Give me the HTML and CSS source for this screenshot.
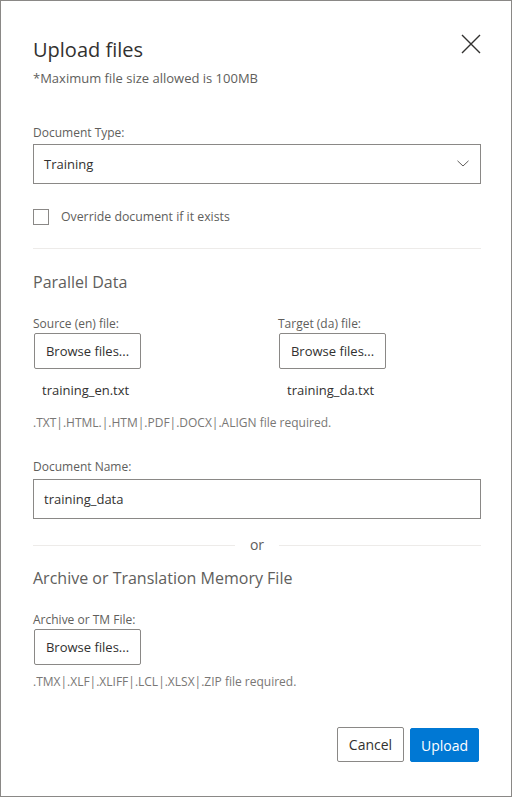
FILE: index.html
```html
<!DOCTYPE html>
<html lang="en">
<head>
<meta charset="utf-8">
<title>Upload files</title>
<link rel="stylesheet" href="styles.css">
</head>
<body>
<div class="dialog">
  <div class="header">
    <h1 class="title">Upload files</h1>
    <button class="close" aria-label="Close">
      <svg width="20" height="20" viewBox="0 0 20 20"><path d="M1 1 L19 19 M19 1 L1 19" stroke="#323130" stroke-width="1.4" fill="none"/></svg>
    </button>
  </div>
  <p class="subtitle">*Maximum file size allowed is 100MB</p>

  <label class="label label-doctype">Document Type:</label>
  <div class="select">
    <span class="select-value">Training</span>
    <svg class="chevron" width="12" height="7" viewBox="0 0 12 7"><path d="M0.5 0.8 L6 6 L11.5 0.8" stroke="#605e5c" stroke-width="1" fill="none"/></svg>
  </div>

  <div class="checkrow">
    <span class="checkbox"></span>
    <span class="checklabel">Override document if it exists</span>
  </div>

  <hr class="divider">

  <h2 class="section">Parallel Data</h2>

  <div class="filegrid">
    <div class="filecol">
      <label class="label">Source (en) file:</label>
      <button class="btn btn-browse">Browse files...</button>
      <div class="filename">training_en.txt</div>
    </div>
    <div class="filecol">
      <label class="label">Target (da) file:</label>
      <button class="btn btn-browse">Browse files...</button>
      <div class="filename">training_da.txt</div>
    </div>
  </div>
  <p class="hint hint-parallel">.TXT|.HTML.|.HTM|.PDF|.DOCX|.ALIGN file required.</p>

  <label class="label label-docname">Document Name:</label>
  <div class="input">training_data</div>

  <div class="or-row">
    <span class="or-line"></span>
    <span class="or-text">or</span>
    <span class="or-line"></span>
  </div>

  <h2 class="section section-archive">Archive or Translation Memory File</h2>
  <label class="label label-tm">Archive or TM File:</label>
  <button class="btn btn-browse">Browse files...</button>
  <p class="hint hint-tm">.TMX|.XLF|.XLIFF|.LCL|.XLSX|.ZIP file required.</p>

  <div class="footer">
    <button class="btn btn-cancel">Cancel</button>
    <button class="btn btn-primary">Upload</button>
  </div>
</div>
</body>
</html>
```

FILE: styles.css
```css
* { box-sizing: border-box; }
html, body { margin: 0; padding: 0; background: #ffffff; }
body {
  font-family: "Open Sans", "Noto Sans", "Liberation Sans", sans-serif;
  color: #323130;
}
.dialog {
  width: 512px;
  height: 797px;
  border: 1px solid #8a8886;
  padding: 33px 30px 0 32px;
  display: flex;
  flex-direction: column;
  align-items: stretch;
}
.header {
  display: flex;
  justify-content: space-between;
  align-items: flex-start;
}
.title {
  margin: 2px 0 0 0;
  font-size: 20px;
  line-height: 28px;
  font-weight: 400;
  color: #323130;
}
.close {
  border: none;
  background: none;
  padding: 0;
  width: 20px;
  height: 20px;
  margin-top: 0;
  display: flex;
}
.subtitle {
  margin: 5px 0 0 0;
  font-size: 13px;
  line-height: 18px;
  color: #605e5c;
}
.label {
  display: block;
  font-size: 12px;
  line-height: 18px;
  color: #605e5c;
}
.label-doctype { margin-top: 37px; }
.select {
  margin-top: 2px;
  height: 40px;
  border: 1px solid #8a8886;
  display: flex;
  align-items: center;
  justify-content: space-between;
  padding: 0 11px 0 10px;
}
.select-value { font-size: 13px; color: #323130; }
.chevron { display: block; margin-top: -2px; }
.checkrow {
  margin-top: 25px;
  display: flex;
  align-items: center;
  gap: 12px;
  height: 16px;
}
.checkbox {
  width: 16px;
  height: 16px;
  border: 1px solid #8a8886;
  flex: none;
}
.checklabel { font-size: 12.3px; color: #605e5c; line-height: 18px; }
.divider {
  margin: 23px 0 0 0;
  border: none;
  border-top: 1px solid #edebe9;
  height: 0;
}
.section {
  margin: 21px 0 0 0;
  font-size: 16px;
  line-height: 24px;
  font-weight: 400;
  color: #605e5c;
}
.filegrid {
  margin-top: 21px;
  display: grid;
  grid-template-columns: 245px 1fr;
}
.filecol { display: flex; flex-direction: column; align-items: flex-start; }
.btn {
  font-family: inherit;
  font-size: 14px;
  color: #323130;
  background: #ffffff;
  border: 1px solid #8a8886;
  border-radius: 2px;
  height: 36px;
  padding: 0 12px;
  margin: 0;
  align-self: flex-start;
  flex: none;
}
.btn-browse { margin-left: 1px; width: 107px; padding: 0; font-size: 13px; }
.filename {
  margin-top: 11px;
  margin-left: 9px;
  font-size: 13px;
  line-height: 20px;
  color: #323130;
}
.hint {
  margin: 0;
  font-size: 12px;
  line-height: 18px;
  color: #797775;
}
.hint-parallel { margin-top: 14px; }
.label-docname { margin-top: 26px; }
.input {
  margin-top: 3px;
  height: 40px;
  border: 1px solid #8a8886;
  display: flex;
  align-items: center;
  padding: 0 10px;
  font-size: 13px;
  color: #323130;
}
.or-row {
  margin-top: 16px;
  height: 20px;
  display: flex;
  align-items: center;
  gap: 15px;
}
.or-line { flex: 1; height: 1px; background: #edebe9; }
.or-text { font-size: 14px; color: #605e5c; line-height: 20px; }
.section-archive { margin-top: 11px; }
.label-tm { margin-top: 21px; }
.hint-tm { margin-top: 8px; }
.footer {
  margin-top: 36px;
  display: flex;
  justify-content: flex-end;
  gap: 6px;
  padding-right: 2px;
}
.btn-cancel { width: 67px; padding: 0; height: 35px; }
.btn-primary {
  width: 69px;
  padding: 0;
  height: 34px;
  margin-top: 1px;
  background: #0078d4;
  border-color: #0078d4;
  color: #ffffff;
}
```
